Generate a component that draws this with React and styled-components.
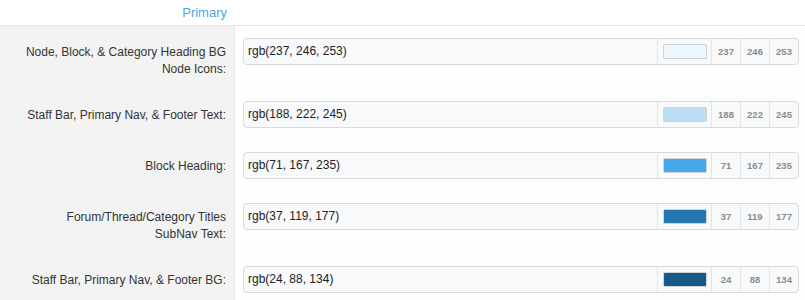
import React from "react";
import styled, { createGlobalStyle } from "styled-components";

const GlobalStyle = createGlobalStyle`
  body {
    margin: 0;
    background: #fefefe;
    font-family: "Liberation Sans", Arial, sans-serif;
  }
`;

const Page = styled.div`
  width: 805px;
`;

const HeaderRow = styled.div`
  display: grid;
  grid-template-columns: 236px 1fr;
  height: 25px;
  border-bottom: 1px solid #e6e6e6;
  background: #fff;
`;

const SectionTitle = styled.div`
  text-align: right;
  padding-right: 9px;
  font-size: 13px;
  line-height: 25px;
  color: #4aa6e6;
`;

const Row = styled.div`
  display: grid;
  grid-template-columns: 235px 1fr;
`;

const Label = styled.div`
  background: #f3f3f3;
  border-right: 1px solid #e9e9e9;
  text-align: right;
  padding: 18px 8px 11px 0;
  font-size: 12px;
  line-height: 17px;
  color: #333;
`;

const Field = styled.div`
  padding: 12px 6px 12px 8px;
`;

const InputBox = styled.div`
  display: flex;
  height: 27px;
  box-sizing: border-box;
  border: 1px solid #d8dadc;
  border-radius: 4px;
  background: #f7f9fb;
  overflow: hidden;
`;

const Value = styled.div`
  flex: 1;
  padding-left: 4px;
  font-size: 12px;
  line-height: 25px;
  color: #222;
`;

const SwatchCell = styled.div`
  width: 54px;
  box-sizing: border-box;
  border-left: 1px solid #e2e4e6;
  display: flex;
  align-items: center;
  justify-content: center;
`;

const Swatch = styled.div`
  width: 44px;
  height: 15px;
  box-sizing: border-box;
  border: 1px solid #cfd3d6;
  border-radius: 2px;
  background: ${(p) => p.color};
`;

const Channel = styled.div`
  width: 29px;
  box-sizing: border-box;
  border-left: 1px solid #e2e4e6;
  text-align: center;
  font-size: 9.5px;
  font-weight: bold;
  line-height: 25px;
  color: #8c8c8c;
`;

const colors = [
  { label: ["Node, Block, & Category Heading BG", "Node Icons:"], rgb: [237, 246, 253] },
  { label: ["Staff Bar, Primary Nav, & Footer Text:"], rgb: [188, 222, 245] },
  { label: ["Block Heading:"], rgb: [71, 167, 235] },
  { label: ["Forum/Thread/Category Titles", "SubNav Text:"], rgb: [37, 119, 177] },
  { label: ["Staff Bar, Primary Nav, & Footer BG:"], rgb: [24, 88, 134] },
];

const ColorRow = ({ label, rgb }) => {
  const value = `rgb(${rgb.join(", ")})`;
  return (
    <Row>
      <Label>
        {label.map((line, i) => (
          <div key={i}>{line}</div>
        ))}
      </Label>
      <Field>
        <InputBox>
          <Value>{value}</Value>
          <SwatchCell>
            <Swatch color={value} />
          </SwatchCell>
          {rgb.map((c, i) => (
            <Channel key={i}>{c}</Channel>
          ))}
        </InputBox>
      </Field>
    </Row>
  );
};

const App = () => (
  <Page>
    <GlobalStyle />
    <HeaderRow>
      <SectionTitle>Primary</SectionTitle>
      <div />
    </HeaderRow>
    {colors.map((c, i) => (
      <ColorRow key={i} {...c} />
    ))}
  </Page>
);

export default App;
